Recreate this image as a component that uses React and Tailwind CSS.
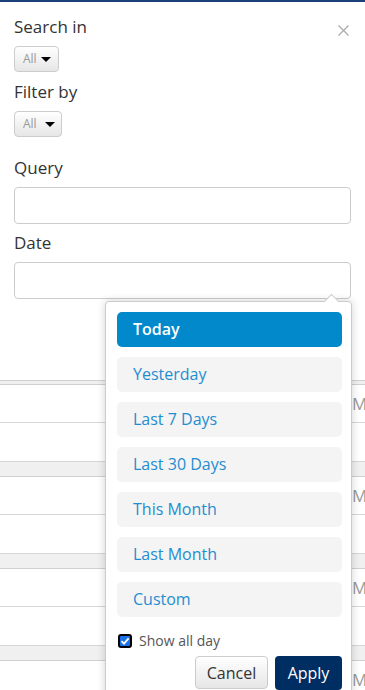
const ranges = ['Today', 'Yesterday', 'Last 7 Days', 'Last 30 Days', 'This Month', 'Last Month', 'Custom']

function AllButton({ wide }) {
  return (
    <button className={`flex items-center h-[26px] pl-[8px] rounded-[4px] border border-[#cccccc] bg-gradient-to-b from-white to-[#e6e6e6] ${wide ? 'w-[48px] gap-[8px]' : 'w-[45px] gap-[4px]'}`}>
      <span className="text-[12px] text-[#999999]">All</span>
      <span className="w-0 h-0 border-l-[5px] border-r-[5px] border-t-[5px] border-l-transparent border-r-transparent border-t-black" />
    </button>
  )
}

function Row({ h, label }) {
  return (
    <div className={`${h} border-b border-[#d6d6d6] flex items-center pl-[352px] whitespace-nowrap text-[17px] text-[#999999]`}>
      {label}
    </div>
  )
}

function Group({ first }) {
  return (
    <>
      <div className={`${first ? 'h-[5px] border-t' : 'h-[15px]'} border-b border-[#d0d0d0] bg-[#f0f0f0]`} />
      <Row h="h-[38px]" label="M" />
      <Row h="h-[39px]" />
    </>
  )
}

export default function App() {
  return (
    <div className="relative w-[365px] h-[690px] overflow-hidden bg-white border-t-2 border-[#1b3f7a] font-['Open_Sans',sans-serif] text-[#333333]">
      <div className="px-[14px] pt-[13px]">
        <div className="flex justify-between items-start">
          <div className="text-[17px] leading-[24px]">Search in</div>
          <svg width="11" height="11" viewBox="0 0 11 11" className="mt-[10px] mr-[2px]">
            <path d="M0.5 0.5L10.5 10.5M10.5 0.5L0.5 10.5" stroke="#aaaaaa" strokeWidth="1.2" />
          </svg>
        </div>
        <div className="mt-[7px]"><AllButton /></div>
        <div className="mt-[8px] text-[17px] leading-[24px]">Filter by</div>
        <div className="mt-[7px]"><AllButton wide /></div>
        <div className="mt-[19px] text-[17px] leading-[24px]">Query</div>
        <div className="mt-[7px] h-[37px] rounded-[4px] border border-[#cccccc]" />
        <div className="mt-[7px] text-[17px] leading-[24px]">Date</div>
        <div className="mt-[7px] h-[37px] rounded-[4px] border border-[#cccccc]" />
      </div>

      <div className="mt-[81px]">
        <Group first />
        <Group />
        <Group />
        <Group />
      </div>

      <div className="absolute left-[105px] top-[299px] w-[247px] h-[420px] bg-white border border-[#cccccc] rounded-[4px] shadow-[0_0_8px_rgba(0,0,0,0.18)] pl-[11px] pr-[9px] pt-[10px]">
        <div className="absolute left-[220px] top-[-6px] w-[11px] h-[11px] rotate-45 bg-white border-l border-t border-[#cccccc]" />
        <div className="flex flex-col gap-[10px]">
          {ranges.map((r, i) => (
            <div
              key={r}
              className={`h-[35px] rounded-[5px] flex items-center pl-[16px] pb-[1px] text-[16px] ${i === 0 ? 'bg-[#0189cc] text-white font-semibold' : 'bg-[#f4f4f4] text-[#1f8dd0]'}`}
            >
              {r}
            </div>
          ))}
        </div>
        <div className="mt-[13px] flex items-center gap-[7px] pl-[1px]">
          <span className="w-[14px] h-[14px] rounded-[3px] border-2 border-black bg-[#1a73e8] flex items-center justify-center">
            <svg width="10" height="10" viewBox="0 0 10 10">
              <path d="M1.5 5.2L4 7.6L8.6 2.4" stroke="white" strokeWidth="1.8" fill="none" />
            </svg>
          </span>
          <span className="text-[14px] text-[#555555]">Show all day</span>
        </div>
        <div className="mt-[5px] flex justify-end gap-[7px]">
          <button className="w-[73px] h-[33px] rounded-[4px] border border-[#cccccc] bg-gradient-to-b from-white to-[#e6e6e6] text-[16px] text-[#333333]">Cancel</button>
          <button className="w-[67px] h-[34px] rounded-[4px] bg-[#002e63] text-[16px] text-white">Apply</button>
        </div>
      </div>
    </div>
  )
}
